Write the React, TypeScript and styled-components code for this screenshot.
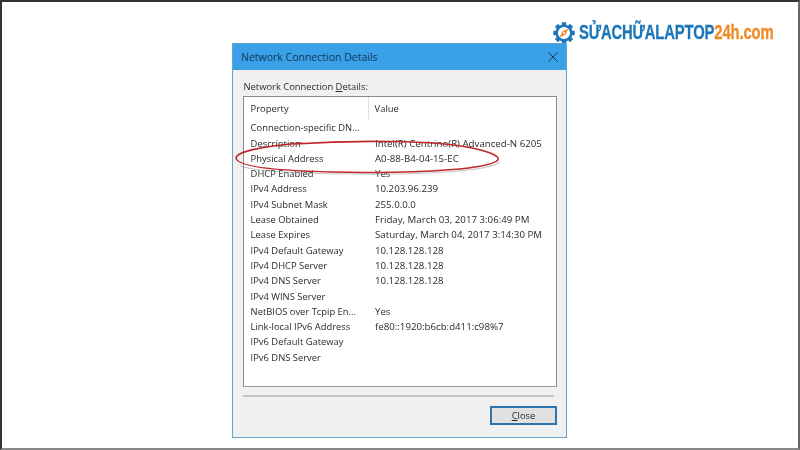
import React from "react";
import styled, { createGlobalStyle } from "styled-components";

const Global = createGlobalStyle`
  html, body { margin: 0; padding: 0; background: #fff; }
  #root { width: 800px; height: 450px; overflow: hidden; }
`;

const Page = styled.div`
  position: relative;
  box-sizing: border-box;
  width: 800px;
  height: 450px;
  background: #fff;
  border-top: 2px solid #333;
  border-left: 2px solid #333;
  border-right: 2px solid #666;
  border-bottom: 2px solid #888;
  overflow: hidden;
  padding: 41px 0 0 230px;
`;

const Logo = styled.div`
  position: absolute;
  left: 551px;
  top: 19px;
  display: flex;
  align-items: center;
  gap: 4px;
  height: 24px;
  filter: blur(0.35px);
`;

const LogoText = styled.div`
  font-family: "Liberation Sans", sans-serif;
  font-weight: 700;
  font-size: 21px;
  line-height: 24px;
  white-space: nowrap;
  letter-spacing: -0.2px;
  transform: translateY(-0.6px) scaleX(0.706);
  transform-origin: left center;
  color: #1b75b8;
  -webkit-text-stroke: 0.3px currentColor;
`;

const Orange = styled.span`
  color: #ee8a23;
`;

const Dialog = styled.div`
  box-sizing: border-box;
  width: 335px;
  height: 395px;
  background: #f0f0f0;
  border: 1px solid #5fa8cc;
  display: flex;
  flex-direction: column;
  font-family: "Open Sans", sans-serif;
  font-size: 9.4px;
  color: #2a2a2a;
  filter: blur(0.4px);
`;

const TitleBar = styled.div`
  height: 26px;
  flex: none;
  background: #3aa0e8;
  display: flex;
  align-items: center;
  justify-content: space-between;
  padding: 0 8px 0 8px;
  color: #123a5c;
  font-size: 10.5px;
  font-weight: 500;
`;

const Body = styled.div`
  flex: 1;
  display: flex;
  flex-direction: column;
  padding: 10px 9px 14px 10px;
`;

const Label = styled.div`
  height: 16px;
  line-height: 14px;
  padding-left: 0.5px;
`;

const ListBox = styled.div`
  box-sizing: border-box;
  height: 291px;
  background: #fff;
  border: 1px solid #8a8a8a;
  border-bottom-color: #999;
  padding: 0 0 0 6.6px;
`;

const HeaderRow = styled.div`
  display: grid;
  grid-template-columns: 117.4px 1fr;
  height: 23.3px;
  line-height: 23px;
`;

const HeaderCell = styled.div<{ $divider?: boolean }>`
  ${(p) => (p.$divider ? "border-left: 1px solid #e2e2e2; padding-left: 5.6px;" : "")}
`;

const Row = styled.div`
  display: grid;
  grid-template-columns: 124.4px 1fr;
  height: 15.3px;
  line-height: 15.3px;
  white-space: nowrap;
`;

const Value = styled.span`
  font-size: 9.7px;
`;

const Separator = styled.div`
  height: 2px;
  background: #c4c4c4;
  margin: 8px 3px 0 0;
`;

const Footer = styled.div`
  display: flex;
  justify-content: flex-end;
  margin-top: 9px;
`;

const CloseButton = styled.button`
  box-sizing: border-box;
  width: 67px;
  height: 19px;
  padding: 0;
  background: #e1e1e1;
  border: 2px solid #2f74ab;
  font: inherit;
  color: #2a2a2a;
`;

const Ellipse = styled.svg`
  position: absolute;
  left: 230px;
  top: 135px;
  pointer-events: none;
  filter: blur(0.3px);
`;

const rows: [string, string][] = [
  ["Connection-specific DN...", ""],
  ["Description", "Intel(R) Centrino(R) Advanced-N 6205"],
  ["Physical Address", "A0-88-B4-04-15-EC"],
  ["DHCP Enabled", "Yes"],
  ["IPv4 Address", "10.203.96.239"],
  ["IPv4 Subnet Mask", "255.0.0.0"],
  ["Lease Obtained", "Friday, March 03, 2017 3:06:49 PM"],
  ["Lease Expires", "Saturday, March 04, 2017 3:14:30 PM"],
  ["IPv4 Default Gateway", "10.128.128.128"],
  ["IPv4 DHCP Server", "10.128.128.128"],
  ["IPv4 DNS Server", "10.128.128.128"],
  ["IPv4 WINS Server", ""],
  ["NetBIOS over Tcpip En...", "Yes"],
  ["Link-local IPv6 Address", "fe80::1920:b6cb:d411:c98%7"],
  ["IPv6 Default Gateway", ""],
  ["IPv6 DNS Server", ""],
];

const Gear = () => (
  <svg width="22" height="22" viewBox="0 0 24 24">
    <g fill="#1b75b8">
      {[0, 45, 90, 135, 180, 225, 270, 315].map((a) => (
        <rect key={a} x="9.6" y="0.3" width="4.8" height="5" transform={`rotate(${a} 12 12)`} />
      ))}
    </g>
    <circle cx="12" cy="12" r="8" fill="#fff" stroke="#1b75b8" strokeWidth="2.8" />
    <path d="M17 7 L10.3 10.3 L7 17 L13.7 13.7 Z" fill="#ee8a23" />
    <circle cx="12" cy="12" r="1.1" fill="#fff" />
  </svg>
);

const CloseIcon = () => (
  <svg width="10" height="10" viewBox="0 0 10 10">
    <path d="M0.5 0.5 L9.5 9.5 M9.5 0.5 L0.5 9.5" stroke="#123a5c" strokeWidth="1" fill="none" />
  </svg>
);

export default function App() {
  return (
    <Page>
      <Global />
      <Logo>
        <Gear />
        <LogoText>
          SỬACHỮALAPTOP<Orange>24h.com</Orange>
        </LogoText>
      </Logo>
      <Dialog>
        <TitleBar>
          <span>Network Connection Details</span>
          <CloseIcon />
        </TitleBar>
        <Body>
          <Label>
            Network Connection <u>D</u>etails:
          </Label>
          <ListBox>
            <HeaderRow>
              <HeaderCell>Property</HeaderCell>
              <HeaderCell $divider>Value</HeaderCell>
            </HeaderRow>
            {rows.map(([k, v]) => (
              <Row key={k}>
                <span>{k}</span>
                <Value>{v}</Value>
              </Row>
            ))}
          </ListBox>
          <Separator />
          <Footer>
            <CloseButton>
              <u>C</u>lose
            </CloseButton>
          </Footer>
        </Body>
      </Dialog>
      <Ellipse width="280" height="50" viewBox="0 0 280 50">
        <path
          d="M8 29 C30 36 90 37 130 37 C190 38 258 34 268 25"
          fill="none"
          stroke="#888"
          strokeWidth="1.2"
          opacity="0.45"
        />
        <path
          d="M62 7 C120 3 205 3 240 11 C258 15 268 19 266 23 C258 32 190 36 130 35.5 C70 35 5 32 4 21 C4 15 30 9 70 6"
          fill="none"
          stroke="#c0272d"
          strokeWidth="1.6"
        />
      </Ellipse>
    </Page>
  );
}
